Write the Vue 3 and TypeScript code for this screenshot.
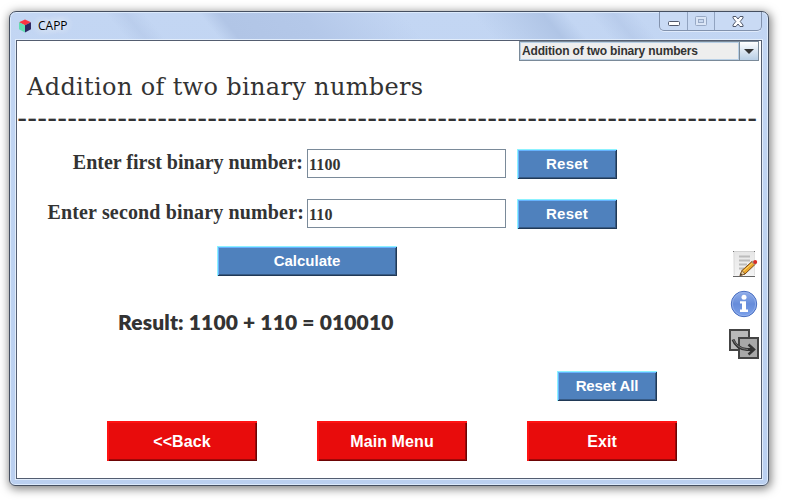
<script setup lang="ts">
import { ref, computed } from 'vue'

const operation = 'Addition of two binary numbers'
const divider = '-'.repeat(74)

const first = ref('1100')
const second = ref('110')
const sum = ref('010010')
const result = computed(() => `Result: ${first.value} + ${second.value} = ${sum.value}`)

function calculate(): void {
  const total = parseInt(first.value || '0', 2) + parseInt(second.value || '0', 2)
  sum.value = '0' + total.toString(2)
}

function resetAll(): void {
  first.value = ''
  second.value = ''
}
</script>

<template>
  <div class="desktop">
    <div class="window">
      <header class="titlebar">
        <svg class="logo" width="14" height="14" viewBox="0 0 14 14">
          <path d="M7 0.5 13 3.2 7 6.2 1 3.2Z" fill="#fb3340" />
          <path d="M1 3.2 7 6.2V13.5L1 10.3Z" fill="#63dcb2" />
          <path d="M13 3.2 7 6.2V13.5L13 10.3Z" fill="#2d2660" />
        </svg>
        <span class="app-name">CAPP</span>
        <div class="controls">
          <span class="control minimize">
            <svg width="14" height="7" viewBox="0 0 14 7">
              <rect x="1.5" y="1.5" width="11" height="4" rx="1" fill="#fff" stroke="#50586b" />
            </svg>
          </span>
          <span class="control maximize">
            <svg width="12" height="10" viewBox="0 0 12 10">
              <rect x="0.5" y="0.5" width="11" height="9" rx="1" fill="#dae5f6" stroke="#98a9c5" />
              <rect x="3.5" y="3.5" width="5" height="3" fill="#c8d8f0" stroke="#98a9c5" />
            </svg>
          </span>
          <span class="control close">
            <svg width="12" height="11" viewBox="0 0 12 11">
              <path d="M1 .5H4L6 3 8 .5H11V2L8.2 5.5 11 9V10.500H8L6 8 4 10.500H1V9L3.800 5.500 1 2Z" fill="#fff" stroke="#50586b" />
            </svg>
          </span>
        </div>
      </header>

      <main class="client">
        <div class="toolbar">
          <div class="combo">
            <span class="combo-value">{{ operation }}</span>
            <span class="combo-arrow">
              <svg width="10" height="5" viewBox="0 0 10 5"><path d="M0 0H10L5 5Z" fill="#333" /></svg>
            </span>
          </div>
        </div>
        <h1 class="title">{{ operation }}</h1>
        <div class="divider">{{ divider }}</div>

        <div class="body">
          <div class="form">
            <div class="row">
              <label class="label" for="first">Enter first binary number:</label>
              <input id="first" v-model="first" class="field" />
              <button class="btn blue" @click="first = ''">Reset</button>
            </div>
            <div class="row">
              <label class="label wide" for="second">Enter second binary number:</label>
              <input id="second" v-model="second" class="field" />
              <button class="btn blue" @click="second = ''">Reset</button>
            </div>
            <button class="btn blue calculate" @click="calculate">Calculate</button>
            <p class="result">{{ result }}</p>
            <button class="btn blue reset-all" @click="resetAll">Reset All</button>
            <nav class="nav">
              <button class="btn red">&lt;&lt;Back</button>
              <button class="btn red">Main Menu</button>
              <button class="btn red">Exit</button>
            </nav>
          </div>

          <aside class="rail">
            <svg width="28" height="28" viewBox="0 0 28 28">
              <defs>
                <linearGradient id="paper" x1="0" y1="0" x2="0" y2="1">
                  <stop offset="0" stop-color="#e6e6e6" />
                  <stop offset="1" stop-color="#f4f4f4" />
                </linearGradient>
              </defs>
              <rect x="3" y="1" width="22" height="25" fill="url(#paper)" />
              <path d="M3 1.500H25" stroke="#d2d2d2" />
              <path d="M3 1.500H4M24 1.500H25" stroke="#777" />
              <path d="M4.500 2V25M24.500 2V25" stroke="#e2e2e2" />
              <path d="M3 26.500H25" stroke="#666" />
              <path d="M9 6.500H20M9 10.500H20M9 14.500H17M9 18.500H14" stroke="#bcbcbc" stroke-width="2" />
              <path d="M10 25.500 12 20.500 22 11.500 25 14.500 15 24Z" fill="#eba62c" stroke="#7c4a17" stroke-width="1" />
              <path d="M13 21.500 22.500 13" stroke="#ffdc72" stroke-width="1" />
              <path d="M10 25.500 12 20.500 15 24Z" fill="#e9cf9e" stroke="#785126" stroke-width="0.800" />
              <path d="M10 25.500 10.800 23.200 12.200 24.600Z" fill="#333" />
              <path d="M21.300 12 23 10.500 26.500 13.500 24.800 15Z" fill="#a39c90" />
              <circle cx="25.200" cy="12" r="2" fill="#d92d25" />
            </svg>
            <svg width="28" height="28" viewBox="0 0 28 28">
              <defs>
                <linearGradient id="ball" x1="0" y1="0" x2="0" y2="1">
                  <stop offset="0" stop-color="#91aeea" />
                  <stop offset="0.500" stop-color="#668cda" />
                  <stop offset="1" stop-color="#7da2eb" />
                </linearGradient>
              </defs>
              <circle cx="14" cy="14" r="12.700" fill="url(#ball)" stroke="#456bbd" />
              <circle cx="14" cy="14" r="11.700" fill="none" stroke="#9bb5ed" stroke-width="0.800" />
              <circle cx="14" cy="7.300" r="2.500" fill="#fff" />
              <path d="M10 11.300H16V19.500H18V22H10V19.500H12V13.500H10Z" fill="#fff" />
            </svg>
            <svg class="swap" width="30" height="30" viewBox="0 0 30 30">
              <rect x="1" y="1" width="19" height="20" fill="#b9b9b9" stroke="#444" stroke-width="2" />
              <rect x="10" y="9" width="19" height="20" fill="#a8a8a8" stroke="#444" stroke-width="2" />
              <path d="M4 10.500C6 16 11 20 18 20.500H23" fill="none" stroke="#343434" stroke-width="3" />
              <path d="M4.500 11C7 16.500 12 20 19 20.500" fill="none" stroke="#777" />
              <path d="M19.500 15.500 25 20.500 19.500 25.500" fill="none" stroke="#343434" stroke-width="2.500" />
            </svg>
          </aside>
        </div>
      </main>
    </div>
  </div>
</template>

<style>
body {
  margin: 0;
  background: #fff;
}
</style>

<style scoped>
* {
  box-sizing: border-box;
}

.desktop {
  height: 500px;
  padding: 11px 0 0 9px;
  overflow: hidden;
}

.window {
  width: 760px;
  height: 475px;
  padding: 0 6px 6px;
  display: flex;
  flex-direction: column;
  border: 1px solid #454f60;
  border-radius: 7px 7px 6px 6px;
  background:
    linear-gradient(51deg, transparent 0 15%, rgba(177, 197, 230, 0.5) 17.5%, transparent 20% 27%, #b1c5e6 29.5%, #b4c8e9 40%, transparent 53% 62%, #b0c5e6 71%, transparent 74% 77%, rgba(177, 197, 230, 0.6) 80%, transparent 83%) 0 0 / 100% 28px no-repeat,
    linear-gradient(#c3d6f3, #bed3f1 50%, #bbd0f0);
  box-shadow:
    inset 0 0 0 1px #dceafc,
    1px 2px 10px 1px rgba(0, 0, 0, 0.5);
}

.titlebar {
  flex: none;
  height: 28px;
  display: flex;
  align-items: flex-start;
}

.logo {
  margin: 7px 0 0 2px;
}

.app-name {
  margin: 6px 0 0 6px;
  font: 12px/16px 'Open Sans', 'Noto Sans', sans-serif;
  color: #000;
  text-shadow: 0 0 8px #fff, 0 0 8px #fff;
}

.controls {
  display: flex;
  width: 103px;
  height: 19px;
  margin-left: auto;
  border: 1px solid #8292ad;
  border-top: 0;
  border-radius: 0 0 5px 5px;
  background: #c9daf4;
  box-shadow: 0 1px 0 #dfeafb;
}

.control {
  display: flex;
  align-items: center;
  justify-content: center;
}

.minimize {
  width: 28px;
  padding-top: 5px;
  border-right: 1px solid #91a3c0;
}

.maximize {
  width: 27px;
  border-right: 1px solid #91a3c0;
}

.close {
  flex: 1;
}

.client {
  flex: 1;
  display: flex;
  flex-direction: column;
  border: 1px solid #535d70;
  background: #fff;
  box-shadow: 0 0 0 1px #e2edfb;
  color: #333;
}

.toolbar {
  display: flex;
  justify-content: flex-end;
  padding-right: 2px;
}

.combo {
  display: flex;
  width: 240px;
  height: 20px;
  border: 1px solid #7a8a99;
  background: #eee;
}

.combo-value {
  flex: 1;
  padding-left: 1px;
  border: 1px solid #b8cfe5;
  font: bold 12px/16px 'Liberation Sans', Arial, sans-serif;
  letter-spacing: -0.16px;
  white-space: nowrap;
}

.combo-arrow {
  display: flex;
  align-items: center;
  justify-content: center;
  width: 19px;
  border-left: 1px solid #7a8a99;
  background: linear-gradient(#fff, #dde8f3 45%, #b8cfe5);
}

.title {
  height: 50px;
  margin: 0;
  padding: 11px 0 0 10px;
  font: normal 24px/30px 'DejaVu Serif', serif;
  letter-spacing: 0.34px;
  white-space: nowrap;
}

.divider {
  height: 10px;
  padding-left: 0.5px;
  font: bold 28px/11px 'Liberation Serif', serif;
  letter-spacing: 0.676px;
  white-space: nowrap;
}

.body {
  flex: 1;
  display: flex;
}

.form {
  display: flex;
  flex-direction: column;
  width: 712px;
  padding-top: 28px;
}

.row {
  display: flex;
  height: 30px;
  margin-bottom: 20px;
}

.label {
  width: 286px;
  margin-right: 4px;
  font: bold 20px/27px 'Liberation Serif', 'Times New Roman', serif;
  text-align: right;
  white-space: nowrap;
}

.label.wide {
  width: 287px;
  margin-right: 3px;
  letter-spacing: 0.15px;
}

.field {
  width: 199px;
  height: 29px;
  margin: 0 11px 0 0;
  padding: 3px 0 0 1px;
  border: 1px solid #7a8a99;
  border-radius: 0;
  outline: 0;
  background: #fff;
  font: bold 16px/20px 'Liberation Serif', serif;
  letter-spacing: 0.15px;
  color: #333;
}

.btn {
  flex: none;
  margin: 0;
  padding: 0;
  border: 0;
  color: #fff;
  white-space: nowrap;
}

.blue {
  width: 100px;
  height: 30px;
  background: #4f81bd;
  box-shadow:
    inset 1px 1px #8cf2ff,
    inset -1px -1px #203956,
    inset 2px 2px #65b3ff,
    inset -2px -2px #375a84;
  font: bold 15px/30px 'Liberation Sans', Arial, sans-serif;
  letter-spacing: 0.2px;
}

.calculate {
  width: 180px;
  margin: -3px 0 0 200px;
  letter-spacing: 0;
}

.result {
  height: 30px;
  margin: 31px 0 0 101px;
  font: 800 21px/30px Lato, sans-serif;
  letter-spacing: 0.14px;
  white-space: nowrap;
}

.reset-all {
  margin: 34px 0 0 540px;
  letter-spacing: -0.1px;
}

.nav {
  display: flex;
  gap: 60px;
  margin: 20px 0 0 90px;
}

.red {
  width: 150px;
  height: 40px;
  background: #e80c0c;
  box-shadow:
    inset 2px 2px #ff1212,
    inset -1px -1px #6c0404,
    inset -2px -2px #9e0808;
  font: bold 16px/41px 'Liberation Sans', Arial, sans-serif;
  letter-spacing: 0.1px;
}

.rail {
  display: flex;
  flex-direction: column;
  align-items: center;
  gap: 12px;
  width: 30px;
  padding-top: 129px;
}

.swap {
  margin-top: -1px;
}
</style>
